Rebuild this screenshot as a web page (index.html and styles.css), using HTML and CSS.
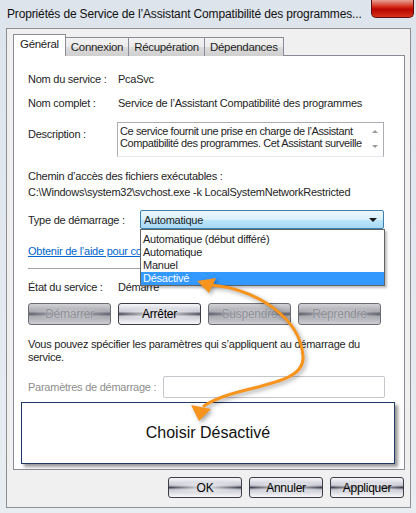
FILE: index.html
```html
<!DOCTYPE html>
<html lang="fr">
  <head>
    <meta charset="UTF-8" />
    <title>Propriétés de Service</title>
    <link rel="stylesheet" href="styles.css">
  </head>
  <body>
    <div class="window">
      <div class="titlebar">
        <span class="title">Propriétés de Service de l’Assistant Compatibilité des programmes...</span>
        <span class="close"></span>
      </div>

      <div class="dialog">
        <div class="tabs">
          <div class="tab active">Général</div>
          <div class="tab">Connexion</div>
          <div class="tab">Récupération</div>
          <div class="tab">Dépendances</div>
        </div>

        <div class="panel">
          <div class="row">
            <span class="label">Nom du service :</span>
            <span>PcaSvc</span>
          </div>
          <div class="row row-name">
            <span class="label">Nom complet :</span>
            <span>Service de l’Assistant Compatibilité des programmes</span>
          </div>
          <div class="row row-desc">
            <span class="label label-top">Description :</span>
            <div class="textbox">
              <div class="textbox-text">Ce service fournit une prise en charge de l’Assistant<br>Compatibilité des programmes. Cet Assistant surveille</div>
              <div class="scroll">
                <span class="scroll-up"></span>
                <span class="scroll-down"></span>
              </div>
            </div>
          </div>

          <div class="path-label">Chemin d’accès des fichiers exécutables :</div>
          <div class="path">C:\Windows\system32\svchost.exe -k LocalSystemNetworkRestricted</div>

          <div class="row row-startup">
            <span class="label label-wide">Type de démarrage :</span>
            <div class="combo">
              <div class="combo-box">
                <span>Automatique</span>
                <span class="combo-arrow"></span>
              </div>
              <ul class="dropdown">
                <li>Automatique (début différé)</li>
                <li>Automatique</li>
                <li>Manuel</li>
                <li class="selected">Désactivé</li>
              </ul>
            </div>
          </div>

          <a class="help" href="#">Obtenir de l’aide pour configurer les options de démarrage.</a>
          <div class="separator"></div>

          <div class="row row-state">
            <span class="label">État du service :</span>
            <span>Démarré</span>
          </div>
          <div class="service-buttons">
            <button class="btn disabled">Démarrer</button>
            <button class="btn">Arrêter</button>
            <button class="btn disabled">Suspendre</button>
            <button class="btn disabled">Reprendre</button>
          </div>

          <p class="note">Vous pouvez spécifier les paramètres qui s’appliquent au démarrage du<br>service.</p>

          <div class="row row-params">
            <span class="label label-params">Paramètres de démarrage :</span>
            <div class="input"></div>
          </div>

          <div class="callout">Choisir Désactivé</div>
        </div>

        <div class="actions">
          <button class="btn">OK</button>
          <button class="btn">Annuler</button>
          <button class="btn">Appliquer</button>
        </div>
      </div>

      <svg class="arrow" width="416" height="513" viewBox="0 0 416 513">
        <path d="M212 285 C258 290 300 318 303 356 C306 388 236 384 204 406" fill="none" stroke="#f7941d" stroke-width="3" stroke-linecap="round" />
        <polygon points="197,281 216,278 209,293" fill="#f7941d" />
        <polygon points="199,421 191,405 211,409" fill="#f7941d" />
      </svg>
    </div>
  </body>
</html>
```

FILE: styles.css
```css
body {
  margin: 0;
  width: 416px;
  height: 513px;
  overflow: hidden;
  font-family: "Liberation Sans", Arial, sans-serif;
  font-size: 11px;
  letter-spacing: -0.25px;
  color: #1e1e1e;
  background: linear-gradient(to bottom, #dde4ec, #e8edf2);
}
.window {
  position: relative;
  height: 513px;
}
.titlebar {
  height: 28px;
  display: flex;
  justify-content: space-between;
  align-items: flex-start;
  padding-left: 7px;
}
.title {
  font-size: 12px;
  letter-spacing: -0.15px;
  line-height: 28px;
  color: #111;
  white-space: nowrap;
  overflow: hidden;
}
.close {
  width: 41px;
  height: 17px;
  flex-shrink: 0;
  margin-right: 2px;
  border: 1px solid #5e1010;
  border-top: none;
  border-radius: 0 0 5px 5px;
  background: linear-gradient(to bottom, #e7a193 0%, #d42a16 40%, #b80600 55%, #d8321c 100%);
}
.dialog {
  margin: 0 5px 0 6px;
  height: 480px;
  box-sizing: border-box;
  border: 1px solid #8c8e92;
  background: #f0f0f0;
  padding: 5px 5px 0 6px;
}
.tabs {
  display: flex;
  align-items: flex-end;
  height: 22px;
  margin-bottom: -1px;
  position: relative;
  z-index: 1;
  white-space: nowrap;
}
.tab {
  height: 19px;
  box-sizing: border-box;
  padding: 0 5px;
  line-height: 18px;
  font-size: 11.5px;
  letter-spacing: -0.3px;
  border: 1px solid #898c95;
  border-bottom: none;
  margin-left: -1px;
  background: linear-gradient(to bottom, #f3f3f3 0%, #ebebeb 50%, #dddddd 51%, #cfcfcf 100%);
}
.tab:first-child {
  margin-left: 0;
}
.tab.active {
  height: 22px;
  line-height: 19px;
  padding: 0 6px;
  background: #fff;
  position: relative;
  z-index: 1;
}
.panel {
  position: relative;
  height: 415px;
  box-sizing: border-box;
  border: 1px solid #898c95;
  background: #fff;
  padding: 16px 19px 0 14px;
  white-space: nowrap;
}
.row {
  display: flex;
  align-items: center;
  line-height: 14px;
}
.label {
  width: 90px;
  flex-shrink: 0;
}
.label-top {
  align-self: flex-start;
  padding-top: 5px;
  width: 89px;
}
.label-wide {
  width: 112px;
}
.label-params {
  width: 135px;
  color: #8d8d8d;
}
.row-name {
  margin-top: 10px;
}
.row-desc {
  margin-top: 12px;
}
.textbox {
  display: flex;
  width: 267px;
  height: 35px;
  box-sizing: border-box;
  border: 1px solid #abadb3;
  border-bottom-color: #e3e9ef;
}
.textbox-text {
  flex: 1;
  padding: 2px 2px;
  line-height: 12px;
  letter-spacing: -0.4px;
  overflow: hidden;
}
.scroll {
  width: 17px;
  flex-shrink: 0;
  display: flex;
  flex-direction: column;
  justify-content: space-between;
  align-items: center;
  padding: 7px 0 8px;
}
.scroll-up,
.scroll-down {
  width: 0;
  height: 0;
  border-left: 3px solid transparent;
  border-right: 3px solid transparent;
}
.scroll-up {
  border-bottom: 3px solid #9a9a9a;
}
.scroll-down {
  border-top: 3px solid #9a9a9a;
}
.path-label {
  margin-top: 12px;
  line-height: 14px;
}
.path {
  margin-top: 2px;
  line-height: 14px;
}
.row-startup {
  margin-top: 11px;
}
.combo {
  position: relative;
  width: 244px;
}
.combo-box {
  height: 19px;
  box-sizing: border-box;
  display: flex;
  align-items: center;
  justify-content: space-between;
  padding: 0 6px 0 3px;
  border: 1px solid #3c7fb1;
  border-radius: 2px;
  background: linear-gradient(to bottom, #eaf6fd 0%, #d9f0fc 50%, #bee6fd 51%, #a7d9f5 100%);
}
.combo-arrow {
  width: 0;
  height: 0;
  border-left: 4px solid transparent;
  border-right: 4px solid transparent;
  border-top: 4px solid #1a1a1a;
}
.dropdown {
  position: absolute;
  top: 100%;
  left: 0;
  right: -1px;
  margin: 0;
  padding: 3px 0 0;
  list-style: none;
  background: #fff;
  border: 1px solid #646464;
  box-shadow: 2px 2px 2px rgba(0, 0, 0, 0.25);
  z-index: 2;
}
.dropdown li {
  line-height: 13px;
  padding-left: 2px;
}
.dropdown li.selected {
  background: #3399ff;
  color: #fff;
}
.help {
  display: block;
  margin-top: 15px;
  line-height: 14px;
  color: #0066cc;
}
.separator {
  margin-top: 10px;
  height: 1px;
  background: #a0a0a0;
}
.row-state {
  margin-top: 11px;
}
.service-buttons {
  display: flex;
  gap: 7px;
  margin-top: 9px;
}
.btn {
  width: 83px;
  height: 22px;
  padding: 0;
  border: 1px solid #3c3d46;
  border-radius: 3px;
  font-family: "Liberation Sans", Arial, sans-serif;
  font-size: 12px;
  letter-spacing: -0.25px;
  color: #000;
  background:
    radial-gradient(ellipse 55% 30% at 50% 50%, rgba(255, 255, 255, 0.95), rgba(255, 255, 255, 0) 100%),
    linear-gradient(to bottom, #f6f6f9 0%, #c9cad4 38%, #2c2e3c 50%, #c9cad4 62%, #f9f9fb 100%);
}
.btn.disabled {
  color: #8e9097;
  text-shadow: 0 0 2px #d0d0d4;
  border-color: #6b6c74;
  background:
    radial-gradient(ellipse 55% 30% at 50% 50%, rgba(210, 210, 214, 0.9), rgba(210, 210, 214, 0) 100%),
    linear-gradient(to bottom, #d2d2d6 0%, #a8a9b0 38%, #4a4c58 50%, #a8a9b0 62%, #cfcfd3 100%);
}
.note {
  margin: 13px 0 0;
  line-height: 13px;
}
.row-params {
  margin-top: 12px;
}
.input {
  width: 222px;
  height: 22px;
  box-sizing: border-box;
  border: 1px solid #c4c6cb;
  border-radius: 2px;
}
.callout {
  margin: 4px -10px 0 -7px;
  height: 62px;
  box-sizing: border-box;
  border: 1px solid #1f3864;
  background: #fff;
  box-shadow: 3px 3px 3px rgba(0, 0, 0, 0.4);
  display: flex;
  align-items: center;
  justify-content: center;
  font-size: 16px;
  letter-spacing: 0;
  color: #111;
}
.actions {
  display: flex;
  justify-content: flex-end;
  gap: 7px;
  margin-top: 7px;
  padding-right: 1px;
}
.actions .btn {
  width: 74px;
  height: 21px;
}
.arrow {
  position: absolute;
  top: 0;
  left: 0;
  pointer-events: none;
  z-index: 5;
  filter: drop-shadow(2px 2px 2px rgba(0, 0, 0, 0.35));
}
```
